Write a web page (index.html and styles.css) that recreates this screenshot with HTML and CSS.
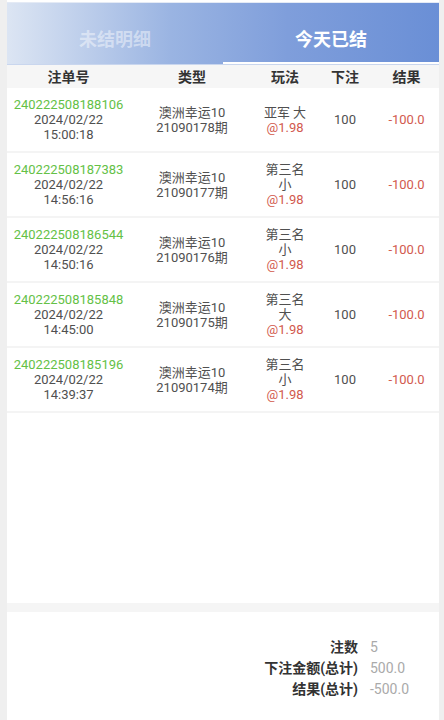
FILE: index.html
```html
<!DOCTYPE html>
<html lang="zh-CN">
<head>
    <meta charset="UTF-8">
    <meta name="viewport" content="width=device-width, initial-scale=1.0">
    <title>今天已结</title>
    <link rel="stylesheet" href="styles.css">
</head>
<body>

<div class="page">
    <div class="tabs">
        <div class="tab">未结明细</div>
        <div class="tab active">今天已结</div>
    </div>

    <div class="table">
        <div class="row head">
            <div>注单号</div>
            <div>类型</div>
            <div>玩法</div>
            <div>下注</div>
            <div>结果</div>
        </div>

        <div class="row">
            <div><span class="order">240222508188106</span><br>2024/02/22<br>15:00:18</div>
            <div>澳洲幸运10<br>21090178期</div>
            <div>亚军 大<br><span class="odds">@1.98</span></div>
            <div>100</div>
            <div class="loss">-100.0</div>
        </div>

        <div class="row">
            <div><span class="order">240222508187383</span><br>2024/02/22<br>14:56:16</div>
            <div>澳洲幸运10<br>21090177期</div>
            <div>第三名<br>小<br><span class="odds">@1.98</span></div>
            <div>100</div>
            <div class="loss">-100.0</div>
        </div>

        <div class="row">
            <div><span class="order">240222508186544</span><br>2024/02/22<br>14:50:16</div>
            <div>澳洲幸运10<br>21090176期</div>
            <div>第三名<br>小<br><span class="odds">@1.98</span></div>
            <div>100</div>
            <div class="loss">-100.0</div>
        </div>

        <div class="row">
            <div><span class="order">240222508185848</span><br>2024/02/22<br>14:45:00</div>
            <div>澳洲幸运10<br>21090175期</div>
            <div>第三名<br>大<br><span class="odds">@1.98</span></div>
            <div>100</div>
            <div class="loss">-100.0</div>
        </div>

        <div class="row">
            <div><span class="order">240222508185196</span><br>2024/02/22<br>14:39:37</div>
            <div>澳洲幸运10<br>21090174期</div>
            <div>第三名<br>小<br><span class="odds">@1.98</span></div>
            <div>100</div>
            <div class="loss">-100.0</div>
        </div>
    </div>

    <div class="spacer"></div>

    <div class="summary">
        <div class="label">注数</div>
        <div class="value">5</div>
        <div class="label">下注金额(总计)</div>
        <div class="value">500.0</div>
        <div class="label">结果(总计)</div>
        <div class="value">-500.0</div>
    </div>
</div>

</body>
</html>
```

FILE: styles.css
```css
body {
    margin: 0;
    background-color: #efefef;
    font-family: Roboto, "Noto Sans CJK SC", sans-serif;
    color: #505050;
}

.page {
    width: 432px;
    height: 720px;
    margin-left: 7px;
    display: flex;
    flex-direction: column;
    background-color: #fff;
}

.tabs {
    display: flex;
    height: 63px;
    margin-top: 2px;
    border-top: 1px solid #e4eaf5;
    border-bottom: 1px solid #c9d6ee;
    background: linear-gradient(90deg, #dce5f3 0%, #9ab4e2 38%, #7f9edb 65%, #6a8fd6 100%);
    box-sizing: border-box;
}

.tab {
    flex: 1;
    padding-top: 25px;
    line-height: 24px;
    font-size: 18px;
    font-weight: bold;
    text-align: center;
    color: rgba(255, 255, 255, 0.45);
    box-sizing: border-box;
}

.tab.active {
    color: #fff;
    border-bottom: 2px solid #fff;
}

.row {
    display: grid;
    grid-template-columns: 123px 124px 62px 58px 65px;
    align-items: center;
    text-align: center;
    font-size: 13px;
    line-height: 15px;
    height: 65px;
    border-bottom: 2px solid #f4f4f4;
    box-sizing: border-box;
}

.row.head {
    height: 23px;
    padding-top: 1px;
    border-bottom: none;
    background-color: #f6f6f6;
    font-size: 14px;
    font-weight: bold;
    color: #333;
}

.order {
    color: #64c146;
}

.odds,
.loss {
    color: #d25a4e;
}

.spacer {
    flex: 1;
    border-bottom: 9px solid #f5f5f5;
}

.summary {
    height: 108px;
    padding-top: 25px;
    padding-right: 11px;
    box-sizing: border-box;
    display: grid;
    grid-template-columns: auto 58px;
    grid-auto-rows: 21px;
    column-gap: 12px;
    justify-content: end;
    align-content: start;
    font-size: 14px;
    line-height: 21px;
}

.summary .label {
    text-align: right;
    font-weight: bold;
    color: #333;
}

.summary .value {
    color: #aaa;
}
```
